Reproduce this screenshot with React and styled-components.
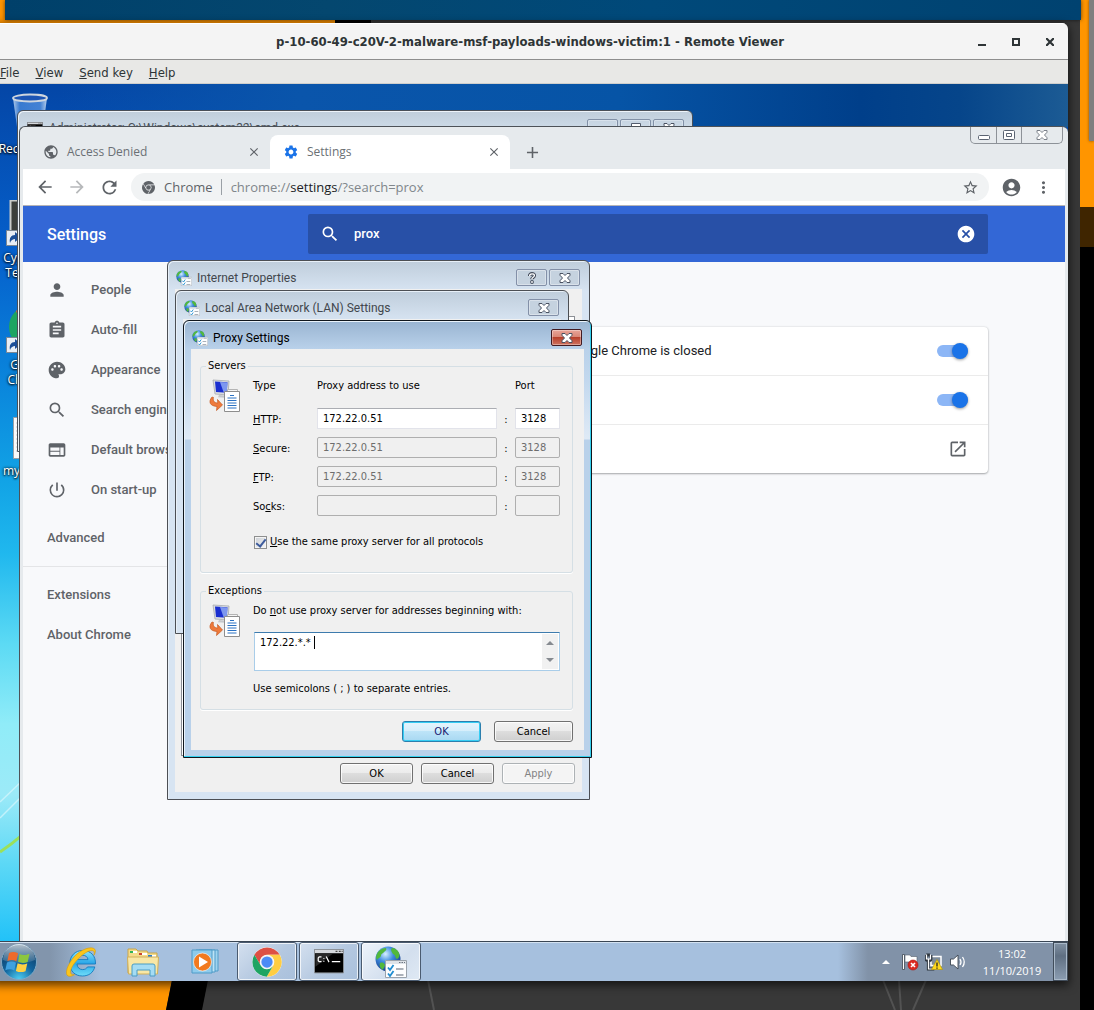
import React from "react";
import styled, { createGlobalStyle, css } from "styled-components";
import {
  MdPerson, MdAssignment, MdPalette, MdSearch, MdWeb, MdPowerSettingsNew,
  MdArrowBack, MdArrowForward, MdRefresh, MdStarBorder, MdAccountCircle,
  MdMoreVert, MdClose, MdAdd, MdPublic, MdSettings, MdOpenInNew, MdCancel,
} from "react-icons/md";
import { SiGooglechrome } from "react-icons/si";

const tahoma = `"DejaVu Sans Condensed", "DejaVu Sans", sans-serif`;
const segoe = `"Open Sans", "Noto Sans", sans-serif`;
const roboto = `Roboto, sans-serif`;

const GlobalStyle = createGlobalStyle`
  * { box-sizing: border-box; }
  body { margin: 0; background: #000; overflow: hidden; }
  button, input, textarea { font: inherit; color: inherit; margin: 0; }
  button { padding: 0; border: 0; background: none; display: inline-flex; align-items: center; justify-content: center; }
`;

/* ---------- host desktop ---------- */

const HostDesktop = styled.div`
  position: relative;
  height: 100vh;
  overflow: hidden;
  background: #383838;
`;

const HostWallpaper = styled.svg`
  position: absolute;
  inset: 0;
  width: 100%;
  height: 100%;
`;

const HostTopWindow = styled.div`
  position: absolute;
  top: 0;
  left: 5px;
  right: 13px;
  height: 20px;
  background: linear-gradient(90deg, #00406a, #04476f 30%, #00497a 60%, #004270);
  box-shadow: 0 0 4px rgba(0, 0, 0, 0.6);
`;

const HostSideWindow = styled.div`
  position: absolute;
  top: 0;
  right: 0;
  width: 5px;
  height: 141px;
  background: #7f7f7f;
  box-shadow: 0 0 3px rgba(0, 0, 0, 0.5);
`;

/* ---------- remote viewer window ---------- */

const Viewer = styled.section`
  position: absolute;
  top: 23px;
  left: -8px;
  right: 26px;
  bottom: 29px;
  display: flex;
  flex-direction: column;
  border-radius: 6px 6px 0 0;
  box-shadow: 0 3px 10px 1px rgba(0, 0, 0, 0.65);
  overflow: hidden;
`;

const ViewerTitleBar = styled.header`
  display: grid;
  grid-template-columns: 110px 1fr 110px;
  align-items: center;
  height: 37px;
  background: #f4f4f4;
  border-top: 1px solid #fff;
  border-bottom: 1px solid #8e8e8e;
  font: bold 13px/16px ${tahoma};
  color: #2e3436;
  h1 { grid-column: 2; margin: 0; font: inherit; text-align: center; white-space: nowrap; }
`;

const ViewerControls = styled.div`
  display: flex;
  justify-content: flex-end;
  padding-right: 6px;
  button { width: 24px; height: 24px; margin-left: 10px; }
`;

const MenuBar = styled.nav`
  display: flex;
  gap: 16px;
  height: 24px;
  padding-left: 8px;
  background: #e8e8e6;
  border-bottom: 1px solid #cfcfcd;
  font: 13px/25px ${tahoma};
  color: #2e3436;
`;

/* ---------- windows desktop ---------- */

const GuestDesktop = styled.div`
  position: relative;
  flex: 1;
  margin-left: 8px;
  overflow: hidden;
  background:
    linear-gradient(90deg, transparent 60px, #0a55ab 300px, #0654a6 620px, #003f8a 860px, #06458a 960px, #1c5b94) top / 100% 43px no-repeat,
    linear-gradient(#0446a6, #0560cc 170px, #0a86dc 300px, #12a4e6 400px, #20b8ee 470px, #5cdaf4 560px, #90ecf8 640px, #9ceaf8 710px, #5cd8f6 780px, #22c2f8 857px);
`;

const WallpaperGlow = styled.svg`
  position: absolute;
  left: 0;
  top: 650px;
`;

const DesktopIcon = styled.div`
  position: absolute;
  top: ${(p) => p.$top}px;
  left: ${(p) => p.$left || 0}px;
  width: 60px;
  display: flex;
  flex-direction: column;
  align-items: ${(p) => (p.$left ? "flex-start" : "center")};
  gap: 4px;
  font: 12px/15px ${segoe};
  color: #fff;
  text-align: center;
  white-space: nowrap;
  text-shadow: 0 1px 2px #000, 0 0 3px #000;
`;

const windowFrame = css`
  position: absolute;
  display: flex;
  flex-direction: column;
  border-radius: 6px 6px 0 0;
  overflow: hidden;
`;

const ConsoleWindow = styled.section`
  ${windowFrame}
  left: 17px;
  top: 26px;
  width: 676px;
  height: 342px;
  border: 1px solid #4a5058;
  background: linear-gradient(#c0cedb, #d6e3f0 30px);
  box-shadow: inset 1px 1px 0 #eef4fa;
`;

const ConsoleTitle = styled.header`
  display: flex;
  align-items: center;
  gap: 6px;
  padding: 8px 8px 0 9px;
  font: 12px/18px ${roboto};
  color: #4a5058;
  h2 { margin: 0; flex: 1; font: inherit; }
`;

const ConsoleControls = styled.div`
  display: flex;
  gap: 2px;
  button { width: 31px; height: 18px; border: 1px solid #8291a7; border-radius: 2px; box-shadow: inset 0 0 0 1px #d8e2ec; }
`;

/* ---------- chrome ---------- */

const ChromeWindow = styled.section`
  ${windowFrame}
  left: 19px;
  top: 42px;
  right: 0;
  bottom: 0;
  padding: 0 3px;
  border: 1px solid #4d5258;
  border-right: 0;
  border-bottom: 0;
  background: #e6eaed;
`;

const TabStrip = styled.div`
  display: flex;
  align-items: flex-end;
  height: 42px;
  padding-left: 7px;
  font: 12px/16px ${segoe};
  color: #6b7075;
`;

const Tab = styled.div`
  display: flex;
  align-items: center;
  gap: 8px;
  flex: 0 1 240px;
  height: 34px;
  padding: 0 9px 0 13px;
  border-radius: 8px 8px 0 0;
  background: ${(p) => (p.$active ? "#fff" : "transparent")};
  span { flex: 1; }
  button { color: #5f6368; }
`;

const NewTab = styled.button`
  width: 28px;
  height: 34px;
  margin-left: 8px;
  color: #5f6368;
`;

const CaptionButtons = styled.div`
  display: flex;
  align-self: flex-start;
  margin: 0 2px 0 auto;
  border: 1px solid #8d9298;
  border-top: 0;
  border-radius: 0 0 5px 5px;
  button { width: 25px; height: 16px; }
  button + button { border-left: 1px solid #8d9298; }
  button:last-child { width: 41px; }
`;

const Toolbar = styled.div`
  display: flex;
  align-items: center;
  height: 37px;
  padding: 0 6px;
  background: #fff;
  border-bottom: 1px solid #b6b4b6;
  color: #5f6368;
`;

const ToolButton = styled.button`
  width: 32px;
  height: 28px;
  opacity: ${(p) => (p.disabled ? 0.45 : 1)};
`;

const AddressBar = styled.div`
  display: flex;
  align-items: center;
  flex: 1;
  height: 28px;
  margin: 0 6px;
  padding: 0 10px 0 11px;
  border-radius: 14px;
  background: #f1f3f4;
  font: 13px/18px ${segoe};
  color: #80868b;
  svg { color: #5f6368; }
`;

const SiteName = styled.span`
  margin-left: 9px;
  padding-right: 8px;
  border-right: 1px solid #9aa0a6;
  line-height: 16px;
  color: #5f6368;
`;

const Url = styled.span`
  flex: 1;
  padding-left: 9px;
  b { font-weight: 400; color: #202124; }
`;

const SettingsHeader = styled.header`
  display: flex;
  align-items: center;
  height: 56px;
  padding: 0 77px 0 24px;
  background: #3367d6;
  color: #fff;
  h2 { flex: none; width: 261px; margin: 0; padding-top: 2px; font: 500 16px/20px ${roboto}; }
`;

const SearchBox = styled.label`
  display: flex;
  align-items: center;
  flex: 1;
  height: 40px;
  padding: 0 12px;
  border-radius: 2px;
  background: #2850a7;
  input {
    flex: 1;
    min-width: 0;
    margin-left: 14px;
    padding: 0;
    border: 0;
    outline: 0;
    background: none;
    font: 500 13px/20px ${roboto};
  }
`;

const SettingsBody = styled.div`
  display: flex;
  flex: 1;
  background: #f8f9fb;
  font: 13px/20px ${roboto};
`;

const SideNav = styled.nav`
  flex: none;
  width: 266px;
  padding-top: 8px;
  font-weight: 500;
  color: #5f6368;
`;

const NavLink = styled.a`
  display: flex;
  align-items: center;
  gap: 24px;
  height: 40px;
  padding-left: 24px;
  color: inherit;
  text-decoration: none;
`;

const NavGroup = styled.div`
  padding: 8px 0;
  border-bottom: ${(p) => (p.$last ? "0" : "1px solid #e4e5e7")};
`;

const SettingsMain = styled.main`
  flex: 1;
  padding: 65px 77px 0 19px;
`;

const Card = styled.div`
  border-radius: 4px;
  background: #fff;
  box-shadow: 0 1px 2px rgba(60, 64, 67, 0.4), 0 0 2px rgba(60, 64, 67, 0.2);
`;

const CardRow = styled.label`
  display: flex;
  align-items: center;
  justify-content: flex-end;
  height: ${(p) => (p.$first ? 48 : 49)}px;
  padding-right: 20px;
  border-top: ${(p) => (p.$first ? 0 : 1)}px solid #ebebeb;
  color: #202124;
  span { flex: 1; padding-left: 20px; white-space: nowrap; }
  svg { color: #5f6368; }
`;

const Switch = styled.input`
  appearance: none;
  position: relative;
  width: 31px;
  height: 12px;
  border-radius: 6px;
  background: #8cb6f6;
  &::before {
    content: "";
    position: absolute;
    right: 0;
    top: -2px;
    width: 16px;
    height: 16px;
    border-radius: 50%;
    background: #1a73e8;
    box-shadow: 0 1px 3px rgba(0, 0, 0, 0.4);
  }
`;

/* ---------- dialogs ---------- */

const Dialog = styled.section`
  ${windowFrame}
  left: ${(p) => p.$x}px;
  top: ${(p) => p.$y}px;
  width: ${(p) => p.$w}px;
  height: ${(p) => (p.$h ? p.$h + "px" : "auto")};
  padding: 0 7px 7px;
  font: 11px/14px ${tahoma};
  color: #000;
  ${(p) =>
    p.$active
      ? css`
          border: 1px solid #10161c;
          background: linear-gradient(#99b4d1, #b9d1ea 28px, #c3d8ee 60px, #dfeaf6 118px, #b9d1ea 119px);
          box-shadow: inset -1px -1px 0 #34d0ee, inset 1px 1px 0 #eaf3fb;
        `
      : css`
          border: 1px solid #4c4f54;
          background: linear-gradient(#bfcddb, #d7e4f2 30px);
          box-shadow: inset 1px 1px 0 #e8f0f8;
        `}
`;

const DialogTitle = styled.header`
  display: flex;
  align-items: center;
  gap: 2px;
  flex: none;
  height: 28px;
  padding: 5px 2px 0 1px;
  font: 12px/16px ${roboto};
  color: ${(p) => (p.$active ? "#000" : "#42474d")};
  h3 { flex: 1; margin: 0; padding-left: 3px; font: inherit; white-space: nowrap; }
`;

const CaptionButton = styled.button`
  width: 31px;
  height: 17px;
  border: 1px solid ${(p) => (p.$danger ? "#431b22" : "#8390a8")};
  border-radius: 2px;
  background: ${(p) => (p.$danger ? "linear-gradient(#e9a599, #d98474 48%, #b8402c 50%, #cf7360)" : "#c5d2df")};
  box-shadow: inset 0 0 0 1px rgba(255, 255, 255, 0.35);
`;

const DialogBody = styled.div`
  display: flex;
  flex-direction: column;
  flex: 1;
  padding: ${(p) => p.$pad || "0"};
  background: #f0f0f0;
`;

const TabPage = styled.div`
  flex: 1;
  border: 1px solid #8c9096;
  background: #fff;
`;

const ButtonRow = styled.div`
  display: flex;
  justify-content: flex-end;
  gap: ${(p) => p.$gap}px;
  margin-top: ${(p) => p.$top}px;
`;

const PushButton = styled.button`
  width: ${(p) => p.$w}px;
  height: 21px;
  border: 1px solid #707070;
  border-radius: 3px;
  background: linear-gradient(#f3f3f3, #ebebeb 49%, #dddddd 50%, #cfcfcf);
  box-shadow: inset 0 0 0 1px rgba(255, 255, 255, 0.8);
  ${(p) =>
    p.$primary &&
    css`
      border-color: #2c7fae;
      color: #191970;
      background: linear-gradient(#e6f4fc, #d5eefb 49%, #bde4f8 50%, #a8d8f2);
      box-shadow: inset 0 0 0 1px #35cdf3;
    `}
  &:disabled {
    border-color: #adb2b5;
    background: #f4f4f4;
    color: #838383;
  }
`;

const Group = styled.fieldset`
  min-width: 0;
  margin: ${(p) => p.$top || 0}px 0 0;
  padding: 6px 12px ${(p) => p.$bottom}px 8px;
  border: 1px solid #d5dfe5;
  border-radius: 3px;
  box-shadow: 0 1px 0 #fff;
  legend { margin-left: -3px; padding: 0 2px; }
`;

const GroupContent = styled.div`
  display: grid;
  grid-template-columns: 32px 1fr;
  column-gap: 12px;
`;

const ProxyGrid = styled.div`
  display: grid;
  grid-template-columns: 64px 180px 18px 45px;
  grid-template-rows: 13px;
  row-gap: 8px;
  align-items: center;
  label { padding-top: 3px; }
`;

const HeaderCell = styled.span`
  &:nth-child(2) { grid-column: 2 / 4; }
`;

const HeaderSpace = styled.i`
  grid-column: 1 / -1;
  height: 0;
`;

const Colon = styled.span`
  padding-top: 3px;
  text-align: center;
`;

const TextBox = styled.input`
  width: 100%;
  height: 21px;
  padding: 0 5px;
  border: 1px solid #e2e3ea;
  border-top-color: #abadb3;
  background: #fff;
  &:disabled {
    border: 1px solid #afafaf;
    border-radius: 2px;
    background: #f0f0f0;
    color: #6d6d6d;
  }
`;

const CheckLine = styled.label`
  display: flex;
  align-items: center;
  gap: 3px;
  margin: 19px 0 0 1px;
  white-space: nowrap;
  input {
    appearance: none;
    display: grid;
    place-items: center;
    width: 13px;
    height: 13px;
    border: 1px solid #8e8f8f;
    background: linear-gradient(135deg, #cbcfd5, #f6f6f6);
    box-shadow: inset 0 0 0 1px #f4f4f4;
  }
  input::before {
    content: "";
    width: 4px;
    height: 8px;
    margin-bottom: 2px;
    border: solid #3d5b9c;
    border-width: 0 2px 2px 0;
    transform: rotate(38deg);
  }
`;

const ExceptionsBox = styled.div`
  position: relative;
  display: flex;
  height: 39px;
  margin: 14px 0 11px 1px;
  padding: 1px;
  border: 1px solid #a9cde9;
  border-top-color: #3d7bad;
  background: #fff;
  textarea {
    flex: 1;
    min-width: 0;
    padding: 2px 4px;
    border: 0;
    outline: 0;
    resize: none;
    overflow: hidden;
    background: none;
    caret-color: transparent;
  }
`;

const Caret = styled.i`
  position: absolute;
  left: 59px;
  top: 3px;
  width: 1px;
  height: 13px;
  background: #000;
`;

const Scroller = styled.div`
  display: flex;
  flex-direction: column;
  width: 16px;
  background: #f1f1f1;
  color: #868a90;
  button { flex: 1; }
`;

/* ---------- taskbar ---------- */

const Taskbar = styled.footer`
  display: flex;
  align-items: center;
  flex: none;
  height: 40px;
  margin-left: 8px;
  border-top: 1px solid #3a4654;
  background: linear-gradient(90deg, #8295ac 50px, #a6c0de 100px, #a6c0de calc(100% - 230px), #8192a8 calc(100% - 200px));
  box-shadow: inset 0 1px 0 #d4e2f1;
`;

const StartButton = styled.button`
  width: 38px;
  height: 38px;
  margin-right: 13px;
`;

const TaskButton = styled.button`
  width: 60px;
  height: 39px;
  margin-right: 2px;
  ${(p) =>
    p.$open &&
    css`
      border: 1px solid #4a5b70;
      border-radius: 3px;
      background: linear-gradient(135deg, ${p.$active ? "#eef4fb, #d3dfee 60%, #dfe9f4" : "#d4e0ef, #b4c8e0 55%, #a9c0dc"});
      box-shadow: inset 0 0 0 1px rgba(255, 255, 255, 0.75);
    `}
`;

const Tray = styled.div`
  display: flex;
  align-items: center;
  height: 100%;
  margin-left: auto;
  font: 11px/17px ${segoe};
  color: #fff;
  text-align: center;
  > button { width: 24px; }
`;

const Clock = styled.time`
  width: 82px;
  margin-left: 1px;
`;

const ShowDesktop = styled.button`
  && { width: 15px; }
  height: 39px;
  border: 1px solid #414d5b;
  box-shadow: inset 0 0 0 1px #a9b8c8;
  background: linear-gradient(#8292a4, #5f6f82 35%, #8b9db2);
`;

/* ---------- drawings ---------- */

const XGlyph = ({ size = 12, stroke = "#4a5262" }) => (
  <svg width={size} height={size - 2} viewBox="0 0 12 10">
    <path d="M1 .5h3L6 2.500 8 .5h3v1.800L8.500 5 11 7.700v1.800H8L6 7.500 4 9.500H1V7.700L3.500 5 1 2.300z" fill="#fff" stroke={stroke} />
  </svg>
);

const HelpGlyph = () => (
  <svg width="10" height="12" viewBox="0 0 10 12">
    <path d="M5 7.3V6.6c0-1 2.4-1.200 2.400-3C7.400 2.200 6.300 1.800 5 1.800S2.600 2.500 2.600 4" fill="none" stroke="#434b5b" strokeWidth="3.400" />
    <circle cx="5" cy="10" r="1.900" fill="#434b5b" />
    <path d="M5 7.300V6.600c0-1 2.400-1.200 2.400-3C7.400 2.200 6.300 1.800 5 1.800S2.600 2.500 2.600 4" fill="none" stroke="#fff" strokeWidth="1.300" />
    <circle cx="5" cy="10" r=".9" fill="#fff" />
  </svg>
);

const InternetOptionsIcon = ({ size = 16 }) => (
  <svg width={size} height={size} viewBox="0 0 32 32">
    <defs>
      <radialGradient id="globe" cx=".4" cy=".3" r=".8">
        <stop offset="0" stopColor="#d6f0ff" />
        <stop offset=".4" stopColor="#3f8ce0" />
        <stop offset="1" stopColor="#0a2a78" />
      </radialGradient>
    </defs>
    <circle cx="13" cy="13" r="12.500" fill="url(#globe)" />
    <path d="M4 5c2-2 4-3 7-3 1 1 0 3-2 4-1 2-3 1-3 4-1 2-3 2-4 4C0 11 2 7 4 5zM17 2c3 0 6 2 7 5 1 3 0 5-2 6-2-1-1-4-4-5-1-2-3-4-1-6zM5 17c3-1 4 0 5 2 0 2-2 3-2 5-3-2-4-4-3-7z" fill="#52b83c" />
    <path d="M10.500 14.500h21v17h-21z" fill="#fdfdfe" stroke="#9aa2ab" />
    <path d="M11 15h20v3H11z" fill="#dfe3e8" />
    <path d="M24 16.500h1.500m1 0H28m1 0h1" stroke="#6b7480" />
    <path d="M13 21.500l2 2.500 3.500-5M13 27.500l2 2.500 3.500-5" fill="none" stroke="#1f8cd0" strokeWidth="1.800" />
    <path d="M21 23h7.500M21 29h7.500" stroke="#8e97a3" strokeWidth="1.500" />
  </svg>
);

const ProxyIcon = () => (
  <svg width="32" height="34" viewBox="0 0 32 34">
    <path d="M4 1l16 1-1 14-13-1z" fill="#d9dce0" stroke="#a7abb0" strokeWidth=".8" />
    <path d="M6 2.500l12.500.8-.8 10.400-10.700-.8z" fill="#1a2fd0" />
    <path d="M11 3l7.500.4-.8 10.300-3-.2z" fill="#8fa9f4" opacity=".85" />
    <path d="M10 16l5 .4 1 2.400-7-.5z" fill="#c4c7cb" />
    <path d="M3 18c-4 5-2 9 5 9.500L7.500 31.500l6-5.500-5-5.500.300 3.500C5.500 24 3.500 22 4.500 18.500z" fill="#ee7a3c" stroke="#c65a22" strokeWidth=".7" />
    <path d="M18.500 10.500h10v20h-10z" fill="#f4f4f4" stroke="#b4b4b4" />
    <path d="M15.500 12.500h15v20h-15z" fill="#fff" stroke="#8e8e8e" />
    <path d="M21 16.500h4M18.500 19h9M18.500 21.500h9M18.500 24h9M18.500 26.500h9M18.500 29h9" stroke="#2a72c4" strokeWidth="1.100" />
  </svg>
);

const ConsoleIcon = ({ size = 16 }) => (
  <svg width={size} height={(size * 26) / 32} viewBox="0 0 32 26">
    <path d="M.5.500h31v25H.5z" fill="#000" stroke="#8d9298" />
    <path d="M1 1h30v3.500H1z" fill="#d5d8dc" />
    <path d="M23 2.500h2m1.500 0h2m1 0h1" stroke="#444" strokeWidth="1.300" />
    <path d="M1.500 5L20 5 4 17l-2.500 2z" fill="#3a3a3a" opacity=".7" />
    <path d="M8 8.500H5.500L4.500 9.500v3l1 1H8M10.500 9.500v1m0 2v1M13 8l3 6M19 13.500h9" fill="none" stroke="#fff" strokeWidth="1.300" />
  </svg>
);

const ChromeLogo = ({ size = 30 }) => (
  <svg width={size} height={size} viewBox="0 0 48 48">
    <circle cx="24" cy="24" r="23.500" fill="#fff" />
    <path d="M3.800 12.300A23.500 23.500 0 0 1 44.400 12.500H24A11.500 11.500 0 0 0 13.600 29z" fill="#dd5044" />
    <path d="M44.400 12.500A23.500 23.500 0 0 1 23.500 47.500L34 29.700A11.500 11.500 0 0 0 29 13.500L24 12.500z" fill="#ffcd42" />
    <path d="M3.800 12.300A23.500 23.500 0 0 0 23.500 47.500L33.500 30.500A11.500 11.500 0 0 1 14 29.700z" fill="#1da462" />
    <circle cx="24" cy="24" r="11" fill="#f1f1f1" />
    <circle cx="24" cy="24" r="9" fill="#4c8bf5" />
  </svg>
);

const StartOrb = () => (
  <svg width="38" height="38" viewBox="0 0 38 38">
    <defs>
      <radialGradient id="orb" cx=".5" cy="1" r="1">
        <stop offset="0" stopColor="#4fd0f4" />
        <stop offset=".45" stopColor="#12659e" />
        <stop offset="1" stopColor="#0d3358" />
      </radialGradient>
      <linearGradient id="shine" x2="0" y2="1">
        <stop offset="0" stopColor="#fff" stopOpacity=".7" />
        <stop offset="1" stopColor="#fff" stopOpacity=".1" />
      </linearGradient>
    </defs>
    <circle cx="19" cy="19" r="17.500" fill="url(#orb)" stroke="#7fa9c6" />
    <path d="M3 17a16 16 0 0 1 32 0c-8 4-24 4-32 0z" fill="url(#shine)" />
    <path d="M9 10c3-1.500 6-1.500 9 .3l-1.600 8c-3-1.600-6-1.600-9-.2z" fill="#ee6a2c" />
    <path d="M19.500 11c3 1.500 6 1.400 10-.2l-1.800 8.200c-3.500 1.300-6.500 1.300-9.700-.2z" fill="#8cc63e" />
    <path d="M7 19.600c3-1.400 6-1.400 9 .2l-1.700 7.700c-3-1.600-6-1.600-9-.2z" fill="#3fa1e0" />
    <path d="M17.600 20.300c3.200 1.500 6.200 1.500 9.700.1l-1.800 7.800c-3.500 1.300-6.500 1.200-9.600-.3z" fill="#fdd045" />
  </svg>
);

const ExplorerE = () => (
  <svg width="32" height="32" viewBox="0 0 32 32">
    <defs>
      <linearGradient id="ie" x2="0" y2="1">
        <stop offset="0" stopColor="#8be4fb" />
        <stop offset=".5" stopColor="#2aa7e8" />
        <stop offset="1" stopColor="#6fdcf8" />
      </linearGradient>
    </defs>
    <path d="M30.500 18H12c.2 3.500 2.500 5.600 5.600 5.600 2.300 0 4-1 4.900-2.700h7.300C28.300 26.500 24 30 17.400 30 10 30 4.800 25 4.800 17.500S10 4.500 17.600 4.500c8.500 0 13.200 5.500 12.900 13.500zM23 13.600C22.700 11 20.700 9.300 17.700 9.300S12.400 11 12 13.600z" fill="url(#ie)" stroke="#1679bd" strokeWidth=".9" />
    <path d="M30 3.500C27-.500 16 3 9 11 2 19-.500 28 3 30c1.500.8 4 .2 6.500-1.400-5.500 1.200-5.300-5.300 1.300-13C17 8 25.500 2.800 28.500 5c1 .8 1 2.400.4 4.200 1.400-2.200 2-4.300 1.100-5.700z" fill="#fbc51c" stroke="#d79a08" strokeWidth=".6" />
  </svg>
);

const FolderIcon = () => (
  <svg width="34" height="32" viewBox="0 0 34 32">
    <path d="M2 3h8l2 2h9l1 2h9v20H2z" fill="#f4dc8c" stroke="#c9a54a" />
    <path d="M4 5h3v2H4z" fill="#2fb457" />
    <path d="M13 7h3v2h-3z" fill="#c8432f" />
    <path d="M22 9h4v2h-4z" fill="#2a7fd0" />
    <path d="M7 5h4v2H7zM16 7h5v2h-5zM26 9h4v2h-4z" fill="#fff" />
    <path d="M1.500 11h31l-1 17h-29z" fill="#f8e7a6" stroke="#d2b05a" />
    <path d="M6 20q0-2 2-2h19q2 0 2 2v10h-5v-6H11v6H6z" fill="#a5dcf3" stroke="#4b9cc4" />
  </svg>
);

const PlayerIcon = () => (
  <svg width="30" height="28" viewBox="-2 0 30 28">
    <path d="M7 2h19v21H7z" fill="#9fd3ee" stroke="#4f9bc8" />
    <path d="M4 2h19v22H4z" fill="#bde3f5" stroke="#4f9bc8" />
    <path d="M0 2h20v23H0z" fill="#8ecbec" stroke="#4f9bc8" />
    <circle cx="10.500" cy="14" r="9" fill="#f17a1f" stroke="#fff" strokeOpacity=".6" />
    <path d="M7 8.500l9 5.500-9 5.500z" fill="#fff" />
  </svg>
);

const RecycleBin = () => (
  <svg width="40" height="44" viewBox="0 0 40 44">
    <defs>
      <linearGradient id="bin">
        <stop offset="0" stopColor="#dcebfa" stopOpacity=".8" />
        <stop offset=".2" stopColor="#4f8fe0" stopOpacity=".7" />
        <stop offset=".8" stopColor="#5f9ae6" stopOpacity=".7" />
        <stop offset="1" stopColor="#e6f1fb" stopOpacity=".8" />
      </linearGradient>
    </defs>
    <path d="M3 5l5 36q12 4 24 0l5-36z" fill="url(#bin)" />
    <ellipse cx="20" cy="5" rx="17" ry="3.500" fill="#1c55b4" stroke="#cfd6de" strokeWidth="1.800" />
  </svg>
);

const Shortcut = () => (
  <>
    <path d="M.5 30.500h16v15H.5z" fill="#e8eef5" stroke="#7c8894" />
    <path d="M4 43c-1-5 1-8 5-8v-3l6 5-6 5v-3c-2 0-4 1-5 4z" fill="#1c4f98" />
  </>
);

const TerminalShortcut = () => (
  <svg width="48" height="46" viewBox="0 0 48 46">
    <path d="M4.500.500h42v36h-42z" fill="#3c3f3c" stroke="#c9cbc9" strokeWidth="2" />
    <Shortcut />
  </svg>
);

const ChromeShortcut = () => (
  <svg width="48" height="46" viewBox="0 0 48 46">
    <circle cx="25" cy="20" r="22" fill="#1da462" />
    <path d="M10 4A22 22 0 0 1 47 12H25l-9 7z" fill="#dd5044" />
    <circle cx="25" cy="20" r="10" fill="#4c8bf5" stroke="#fff" strokeWidth="2" />
    <Shortcut />
  </svg>
);

const TextFileIcon = () => (
  <svg width="34" height="42" viewBox="0 0 34 42">
    <path d="M.5.500h33v41H.5z" fill="#fafafa" stroke="#9aa0a6" />
    <path d="M3 6h20M3 10h20M3 14h20M3 18h20M3 22h20M3 26h20M3 30h20M3 34h20" stroke="#c4c8cd" />
  </svg>
);

const FlagIcon = () => (
  <svg width="18" height="18" viewBox="0 0 18 18">
    <path d="M1.500 1.500h2v15h-2z" fill="#fff" stroke="#3d4650" strokeWidth=".8" />
    <path d="M4 2h5l1 1.500h6v7H9L8 9H4z" fill="#fff" stroke="#55606c" strokeWidth=".6" />
    <circle cx="12" cy="12" r="5" fill="#dc2a22" stroke="#a81510" strokeWidth=".6" />
    <path d="M10 10l4 4m0-4l-4 4" stroke="#fff" strokeWidth="1.600" />
  </svg>
);

const NetworkIcon = () => (
  <svg width="18" height="18" viewBox="0 0 18 18">
    <path d="M6 3.500h10v9H6z" fill="#7d8b9a" stroke="#fff" strokeWidth="1.500" />
    <path d="M1 2v4q0 1.500 1.500 1.500h.8V16h6M1.200 2h4M6 2v4q0 1.500-1.500 1.500" fill="none" stroke="#2e363f" strokeWidth="2.800" />
    <path d="M1.500 1.500v4.500h4V1.500M3.500 6v10h5" fill="none" stroke="#fff" strokeWidth="1.200" />
    <path d="M12 6.500l5.500 10h-11z" fill="#ffd91c" stroke="#b39500" strokeWidth=".6" />
    <path d="M12 9.500v4m0 1v1.200" stroke="#222" strokeWidth="1.300" />
  </svg>
);

const SpeakerIcon = () => (
  <svg width="18" height="16" viewBox="0 0 18 16">
    <path d="M1.500 5h3L9 1v14l-4.500-4h-3z" fill="#fff" stroke="#3d4650" strokeWidth=".9" />
    <path d="M11 5q2 3 0 6M13.500 3q3.500 5 0 10" fill="none" stroke="#fff" strokeWidth="1.300" />
  </svg>
);

/* ---------- page ---------- */

const navItems = [
  [MdPerson, "People"],
  [MdAssignment, "Auto-fill"],
  [MdPalette, "Appearance"],
  [MdSearch, "Search engine"],
  [MdWeb, "Default browser"],
  [MdPowerSettingsNew, "On start-up"],
];

const proxyRows = [
  { id: "http", label: <><u>H</u>TTP:</>, address: "172.22.0.51", port: "3128" },
  { id: "secure", label: <><u>S</u>ecure:</>, address: "172.22.0.51", port: "3128", off: true },
  { id: "ftp", label: <><u>F</u>TP:</>, address: "172.22.0.51", port: "3128", off: true },
  { id: "socks", label: <>So<u>c</u>ks:</>, address: "", port: "", off: true },
];

function ChromeBrowser() {
  return (
    <ChromeWindow>
      <TabStrip>
        <Tab>
          <MdPublic size={16} color="#5f6368" />
          <span>Access Denied</span>
          <button aria-label="Close tab"><MdClose size={14} /></button>
        </Tab>
        <Tab $active>
          <MdSettings size={16} color="#1a73e8" />
          <span>Settings</span>
          <button aria-label="Close tab"><MdClose size={14} /></button>
        </Tab>
        <NewTab aria-label="New tab"><MdAdd size={19} /></NewTab>
        <CaptionButtons>
          <button aria-label="Minimise">
            <svg width="12" height="12" viewBox="0 0 12 12"><rect x=".5" y="6.500" width="11" height="4" rx="1" fill="#fff" stroke="#5b6472" /></svg>
          </button>
          <button aria-label="Restore">
            <svg width="12" height="10" viewBox="0 0 12 10"><rect x=".5" y=".5" width="11" height="9" rx="1" fill="#fff" stroke="#5b6472" /><path d="M3.500 3.500h5v3h-5z" fill="none" stroke="#5b6472" /></svg>
          </button>
          <button aria-label="Close"><XGlyph stroke="#7a8089" /></button>
        </CaptionButtons>
      </TabStrip>
      <Toolbar>
        <ToolButton aria-label="Back"><MdArrowBack size={20} /></ToolButton>
        <ToolButton aria-label="Forward" disabled><MdArrowForward size={20} /></ToolButton>
        <ToolButton aria-label="Reload"><MdRefresh size={21} /></ToolButton>
        <AddressBar>
          <SiGooglechrome size={13} />
          <SiteName>Chrome</SiteName>
          <Url>chrome://<b>settings</b>/?search=prox</Url>
          <button aria-label="Bookmark"><MdStarBorder size={17} /></button>
        </AddressBar>
        <ToolButton aria-label="Profile"><MdAccountCircle size={21} /></ToolButton>
        <ToolButton aria-label="Menu"><MdMoreVert size={19} /></ToolButton>
      </Toolbar>
      <SettingsHeader>
        <h2>Settings</h2>
        <SearchBox>
          <MdSearch size={20} aria-label="Search settings" />
          <input type="text" defaultValue="prox" />
          <button aria-label="Clear search"><MdCancel size={20} /></button>
        </SearchBox>
      </SettingsHeader>
      <SettingsBody>
        <SideNav>
          {navItems.map(([Icon, text]) => (
            <NavLink href="#" key={text}><Icon size={20} />{text}</NavLink>
          ))}
          <NavGroup><NavLink href="#">Advanced</NavLink></NavGroup>
          <NavGroup $last>
            <NavLink href="#">Extensions</NavLink>
            <NavLink href="#">About Chrome</NavLink>
          </NavGroup>
        </SideNav>
        <SettingsMain>
          <Card>
            <CardRow $first>
              <span>Continue running background apps when Google Chrome is closed</span>
              <Switch type="checkbox" role="switch" defaultChecked />
            </CardRow>
            <CardRow><Switch type="checkbox" role="switch" defaultChecked aria-label="Use hardware acceleration" /></CardRow>
            <CardRow><MdOpenInNew size={20} /></CardRow>
          </Card>
        </SettingsMain>
      </SettingsBody>
    </ChromeWindow>
  );
}

function ProxyDialog() {
  return (
    <Dialog $active $x={183} $y={236} $w={409}>
      <DialogTitle $active>
        <InternetOptionsIcon />
        <h3>Proxy Settings</h3>
        <CaptionButton $danger aria-label="Close"><XGlyph /></CaptionButton>
      </DialogTitle>
      <DialogBody $pad="10px 11px 8px 9px">
        <Group $bottom={23}>
          <legend>Servers</legend>
          <GroupContent>
            <ProxyIcon />
            <div>
              <ProxyGrid>
                <HeaderCell>Type</HeaderCell>
                <HeaderCell>Proxy address to use</HeaderCell>
                <HeaderCell>Port</HeaderCell>
                <HeaderSpace />
                {proxyRows.map((r) => (
                  <React.Fragment key={r.id}>
                    <label htmlFor={r.id}>{r.label}</label>
                    <TextBox id={r.id} defaultValue={r.address} disabled={r.off} />
                    <Colon>:</Colon>
                    <TextBox aria-label="Port" defaultValue={r.port} disabled={r.off} />
                  </React.Fragment>
                ))}
              </ProxyGrid>
              <CheckLine>
                <input type="checkbox" defaultChecked />
                <span><u>U</u>se the same proxy server for all protocols</span>
              </CheckLine>
            </div>
          </GroupContent>
        </Group>
        <Group $top={11} $bottom={13}>
          <legend>Exceptions</legend>
          <GroupContent>
            <ProxyIcon />
            <div>
              <label htmlFor="exceptions">Do <u>n</u>ot use proxy server for addresses beginning with:</label>
              <ExceptionsBox>
                <textarea id="exceptions" defaultValue="172.22.*.*" />
                <Caret />
                <Scroller>
                  <button aria-label="Scroll up"><svg width="8" height="4"><path d="M0 4l4-4 4 4z" fill="currentColor" /></svg></button>
                  <button aria-label="Scroll down"><svg width="8" height="4"><path d="M0 0l4 4 4-4z" fill="currentColor" /></svg></button>
                </Scroller>
              </ExceptionsBox>
              Use semicolons ( ; ) to separate entries.
            </div>
          </GroupContent>
        </Group>
        <ButtonRow $gap={13} $top={11}>
          <PushButton $w={79} $primary>OK</PushButton>
          <PushButton $w={79}>Cancel</PushButton>
        </ButtonRow>
      </DialogBody>
    </Dialog>
  );
}

export default function App() {
  return (
    <HostDesktop>
      <GlobalStyle />
      <HostWallpaper viewBox="0 0 1094 1010" preserveAspectRatio="none">
        <path d="M0 0h335v24H0z" fill="#ff9500" />
        <path d="M335 0h36v24h-36z" fill="#000" />
        <path d="M0 980h172l-6 30H0z" fill="#ff9500" />
        <path d="M172 980h36l-6 30h-36z" fill="#000" />
        <path d="M1080 0h14v207h-14z" fill="#ff9500" />
        <path d="M1080 207h14v40h-14z" fill="#3f2500" />
        <path d="M1080 247h14v763h-14z" fill="#000" />
        <path d="M883 980l12 30M899 980l2 30M926 980l-13 30M428 980l6 30" fill="none" stroke="#525252" strokeWidth="2" />
      </HostWallpaper>
      <HostTopWindow />
      <HostSideWindow />

      <Viewer>
        <ViewerTitleBar>
          <h1>p-10-60-49-c20V-2-malware-msf-payloads-windows-victim:1 - Remote Viewer</h1>
          <ViewerControls>
            <button aria-label="Minimise"><svg width="8" height="8"><path d="M0 7h8" stroke="currentColor" strokeWidth="2" /></svg></button>
            <button aria-label="Maximise"><svg width="8" height="8"><path d="M1 1h6v6H1z" fill="none" stroke="currentColor" strokeWidth="2" /></svg></button>
            <button aria-label="Close"><svg width="8" height="8"><path d="M0 0l8 8M8 0L0 8" stroke="currentColor" strokeWidth="2.200" /></svg></button>
          </ViewerControls>
        </ViewerTitleBar>
        <MenuBar>
          <span><u>F</u>ile</span>
          <span><u>V</u>iew</span>
          <span><u>S</u>end key</span>
          <span><u>H</u>elp</span>
        </MenuBar>

        <GuestDesktop>
          <WallpaperGlow width="22" height="207" viewBox="0 0 22 207">
            <path d="M0 68l22-21M0 84l22-22" stroke="#d8f7fc" fill="none" strokeWidth="1.500" opacity=".7" />
            <path d="M0 118Q12 110 22 101" stroke="#9be05a" fill="none" strokeWidth="3" />
          </WallpaperGlow>
          <DesktopIcon $top={9}><RecycleBin />Recycle Bin</DesktopIcon>
          <DesktopIcon $top={116}><TerminalShortcut /><span>Cygwin64<br />Terminal</span></DesktopIcon>
          <DesktopIcon $top={223}><ChromeShortcut /><span>Google<br />Chrome</span></DesktopIcon>
          <DesktopIcon $top={333}><TextFileIcon /></DesktopIcon>
          <DesktopIcon $top={379} $left={3}><span>my</span></DesktopIcon>

          <ConsoleWindow>
            <ConsoleTitle>
              <ConsoleIcon />
              <h2>Administrator: C:\Windows\system32\cmd.exe</h2>
              <ConsoleControls>
                <button aria-label="Minimise" />
                <button aria-label="Maximise"><svg width="10" height="10"><path d="M.5.500h9v8h-9z" fill="#fff" stroke="#535c6d" /></svg></button>
                <button aria-label="Close"><XGlyph /></button>
              </ConsoleControls>
            </ConsoleTitle>
          </ConsoleWindow>

          <ChromeBrowser />

          <Dialog $x={167} $y={176} $w={423} $h={540}>
            <DialogTitle>
              <InternetOptionsIcon />
              <h3>Internet Properties</h3>
              <CaptionButton aria-label="Help"><HelpGlyph /></CaptionButton>
              <CaptionButton aria-label="Close"><XGlyph /></CaptionButton>
            </DialogTitle>
            <DialogBody $pad="27px 7px 8px 6px">
              <TabPage />
              <ButtonRow $gap={8} $top={7}>
                <PushButton $w={73}>OK</PushButton>
                <PushButton $w={73}>Cancel</PushButton>
                <PushButton $w={73} disabled>Apply</PushButton>
              </ButtonRow>
            </DialogBody>
          </Dialog>

          <Dialog $x={175} $y={206} $w={394} $h={344}>
            <DialogTitle>
              <InternetOptionsIcon />
              <h3>Local Area Network (LAN) Settings</h3>
              <CaptionButton aria-label="Close"><XGlyph /></CaptionButton>
            </DialogTitle>
            <DialogBody />
          </Dialog>

          <ProxyDialog />
        </GuestDesktop>

        <Taskbar>
          <StartButton aria-label="Start"><StartOrb /></StartButton>
          <TaskButton aria-label="Internet Explorer"><ExplorerE /></TaskButton>
          <TaskButton aria-label="Windows Explorer"><FolderIcon /></TaskButton>
          <TaskButton aria-label="Media Player"><PlayerIcon /></TaskButton>
          <TaskButton $open aria-label="Google Chrome"><ChromeLogo /></TaskButton>
          <TaskButton $open aria-label="Command Prompt"><ConsoleIcon size={30} /></TaskButton>
          <TaskButton $open $active aria-label="Internet Options"><InternetOptionsIcon size={32} /></TaskButton>
          <Tray>
            <button aria-label="Show hidden icons"><svg width="8" height="4"><path d="M0 4l4-4 4 4z" fill="#fff" /></svg></button>
            <button aria-label="Action Centre"><FlagIcon /></button>
            <button aria-label="Network"><NetworkIcon /></button>
            <button aria-label="Volume"><SpeakerIcon /></button>
            <Clock>13:02<br />11/10/2019</Clock>
            <ShowDesktop aria-label="Show desktop" />
          </Tray>
        </Taskbar>
      </Viewer>
    </HostDesktop>
  );
}
